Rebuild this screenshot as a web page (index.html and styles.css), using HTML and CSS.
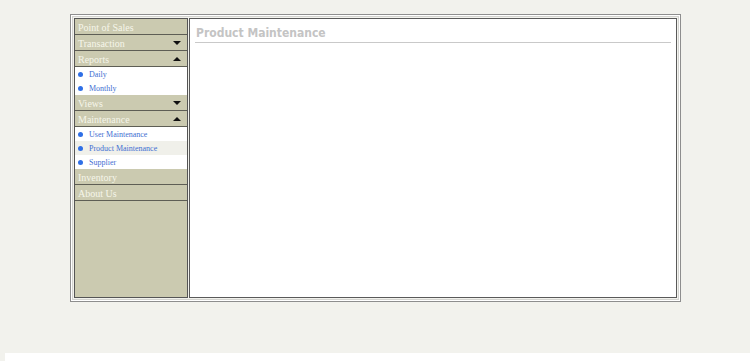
FILE: index.html
```html
<!DOCTYPE html>
<html lang="en">
<head>
    <meta charset="UTF-8">
    <title>Product Maintenance</title>
    <link rel="stylesheet" href="styles.css">
</head>
<body>
    <div class="frame">
        <div class="sidebar">
            <div class="menu-head">Point of Sales</div>
            <div class="menu-head">Transaction <span class="arrow down"></span></div>
            <div class="menu-head">Reports <span class="arrow up"></span></div>
            <div class="menu-items">
                <a class="menu-item" href="#">Daily</a>
                <a class="menu-item" href="#">Monthly</a>
            </div>
            <div class="menu-head">Views <span class="arrow down"></span></div>
            <div class="menu-head">Maintenance <span class="arrow up"></span></div>
            <div class="menu-items">
                <a class="menu-item" href="#">User Maintenance</a>
                <a class="menu-item active" href="#">Product Maintenance</a>
                <a class="menu-item" href="#">Supplier</a>
            </div>
            <div class="menu-head">Inventory</div>
            <div class="menu-head">About Us</div>
        </div>
        <div class="content">
            <h2 class="page-title">Product Maintenance</h2>
        </div>
    </div>
    <div class="footer"></div>
</body>
</html>
```

FILE: styles.css
```css
body {
    margin: 0;
    padding-top: 14px;
    background-color: #f2f2ed;
    font-family: "Liberation Serif", serif;
}
.frame {
    display: flex;
    gap: 1px;
    width: 603px;
    height: 280px;
    margin-left: 70px;
    padding: 3px;
    border: 1px solid #8e8e8e;
    box-shadow: inset 0 0 0 1px #ffffff, inset 0 0 0 2px #d4d4d0;
}
.sidebar {
    width: 112px;
    border: 1px solid #555555;
    background-color: #cbcab0;
}
.menu-head {
    display: flex;
    align-items: center;
    justify-content: space-between;
    height: 14px;
    padding: 1px 6px 0 3px;
    border-bottom: 1px solid #5e5e55;
    color: #f6f6ea;
    font-size: 10px;
}
.arrow {
    width: 0;
    height: 0;
    border-left: 4px solid transparent;
    border-right: 4px solid transparent;
}
.arrow.down {
    border-top: 4px solid #111111;
}
.arrow.up {
    border-bottom: 4px solid #111111;
}
.menu-items {
    background-color: #ffffff;
}
.menu-item {
    display: flex;
    align-items: center;
    height: 14px;
    padding-left: 3px;
    color: #3f6fd2;
    font-size: 8px;
    text-decoration: none;
}
.menu-item::before {
    content: "";
    flex-shrink: 0;
    width: 5px;
    height: 5px;
    margin-right: 6px;
    border-radius: 50%;
    background-color: #2f6fe6;
}
.menu-item.active {
    background-color: #f0f0ea;
}
.content {
    flex: 1;
    border: 1px solid #5a5a5a;
    background-color: #ffffff;
}
.page-title {
    margin: 7px 5px 0 5px;
    padding: 0 0 2px 1px;
    border-bottom: 1px solid #c9c9c9;
    color: #c4c4c4;
    font-family: "DejaVu Sans Condensed", "DejaVu Sans", sans-serif;
    font-size: 12px;
    font-weight: bold;
}
.footer {
    height: 10px;
    margin: 51px 0 0 5px;
    background-color: #ffffff;
}
```
